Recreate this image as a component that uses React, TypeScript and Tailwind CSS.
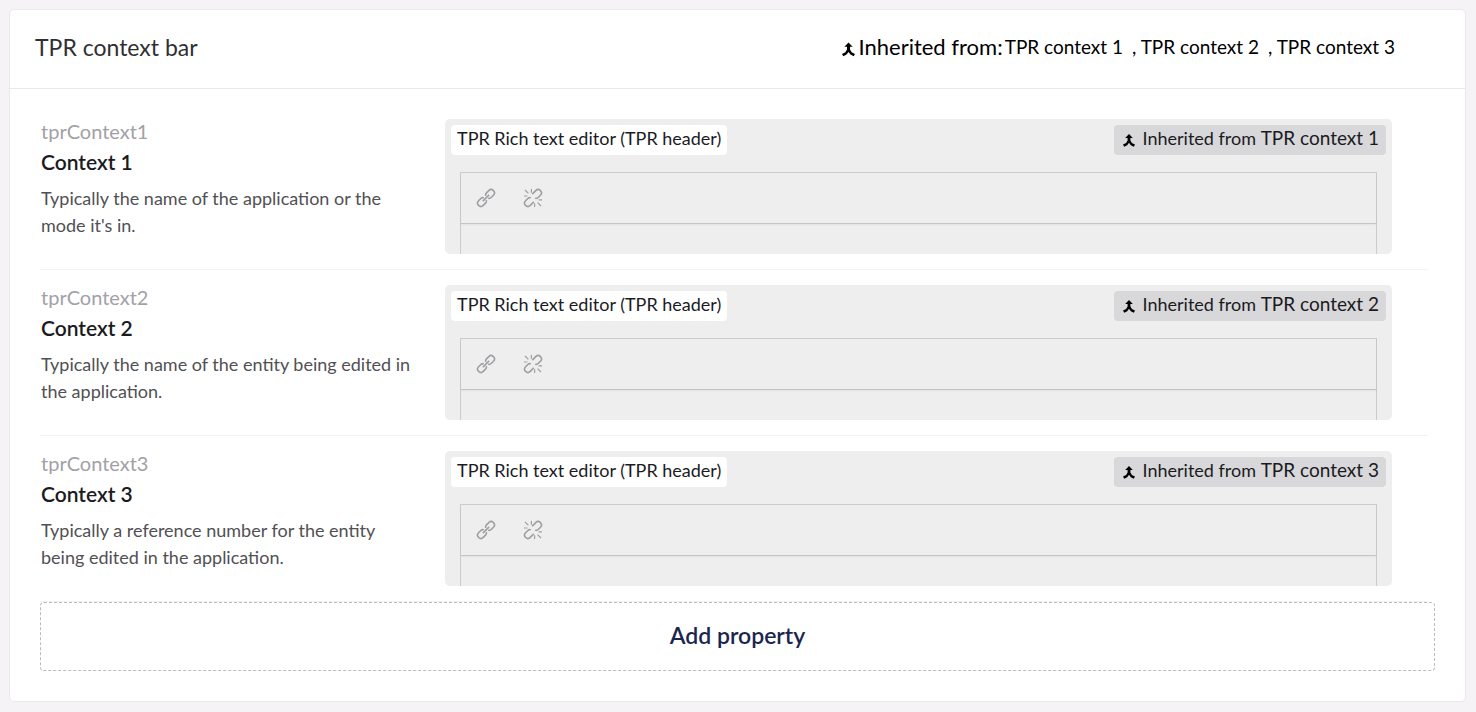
const inheritedFrom = ["TPR context 1", "TPR context 2", "TPR context 3"];

const properties = [
  {
    alias: "tprContext1",
    name: "Context 1",
    description: "Typically the name of the application or the mode it's in.",
    source: "TPR context 1",
  },
  {
    alias: "tprContext2",
    name: "Context 2",
    description: "Typically the name of the entity being edited in the application.",
    source: "TPR context 2",
  },
  {
    alias: "tprContext3",
    name: "Context 3",
    description: "Typically a reference number for the entity being edited in the application.",
    source: "TPR context 3",
  },
];

function MergeIcon({ className }: { className: string }) {
  return (
    <svg viewBox="0 0 12 13" className={className} aria-hidden="true">
      <path d="M6 0 L9.8 4 H7.4 V6.6 L8.9 9 L12 10.6 L10.8 12.8 L7.8 11.2 L6 8.8 L4.2 11.2 L1.2 12.8 L0 10.6 L3.1 9 L4.6 6.6 V4 H2.2 Z" fill="#000" />
    </svg>
  );
}

function LinkIcon() {
  return (
    <svg viewBox="0 0 20 20" className="size-5" fill="none" stroke="#a0a0a4" strokeWidth="1.6" aria-hidden="true">
      <g transform="translate(10 10) rotate(-45)">
        <path d="M1.4 -1.6 C1.8 -2.7 2.8 -3.3 4 -3.3 H7.2 A3.3 3.3 0 0 1 7.2 3.3 H4 C2.8 3.3 1.8 2.7 1.4 1.6" />
        <path d="M-1.4 -1.6 C-1.8 -2.7 -2.8 -3.3 -4 -3.3 H-7.2 A3.3 3.3 0 0 0 -7.2 3.3 H-4 C-2.8 3.3 -1.8 2.7 -1.4 1.6" />
        <path d="M-4.4 0 H4.4" />
      </g>
    </svg>
  );
}

function UnlinkIcon() {
  return (
    <svg viewBox="0 0 20 20" className="size-5" fill="none" stroke="#a0a0a4" strokeWidth="1.6" aria-hidden="true">
      <g transform="translate(10 10) rotate(-45)">
        <path d="M2.2 -3.3 H7.2 A3.3 3.3 0 0 1 7.2 3.3 H4 C2.8 3.3 1.8 2.7 1.4 1.6" />
        <path d="M-2.2 3.3 H-7.2 A3.3 3.3 0 0 1 -7.2 -3.3 H-4 C-2.8 -3.3 -1.8 -2.7 -1.4 -1.6" />
      </g>
      <path d="M2 2 L5.4 5.4 M8.4 1 V4.8 M1 8 H4.4 M14.6 14.6 L18 18 M11.6 15.2 V19 M15.6 11.8 H19" strokeWidth="1.2" />
    </svg>
  );
}

export default function App() {
  return (
    <div className="min-h-screen bg-[#f5f3f5] py-[9px] pr-[10px] pl-[9px] font-['Lato',sans-serif]">
      <section className="rounded-[5px] border border-[#e9e9eb] bg-white">
        <header className="flex h-[79px] items-center justify-between border-b border-[#e9e9eb] pr-[70px] pl-[25px]">
          <h1 className="pb-1 text-[23px] leading-8 text-[#303033]">TPR context bar</h1>
          <div className="flex items-center pb-1 text-black">
            <MergeIcon className="mt-1 mr-[3px] h-[15px] w-[13px]" />
            <span className="mr-[2px] text-[22px] leading-8">Inherited from:</span>
            <span className="flex gap-[9px] text-[19px] leading-8">
              {inheritedFrom.map((name, i) => (
                <span key={name}>
                  {i > 0 && ", "}
                  <a href="#">{name}</a>
                </span>
              ))}
            </span>
          </div>
        </header>
        <div className="px-[30px] pt-[15px] pb-[30px]">
          <div className="pr-[7px]">
            {properties.map((p) => (
              <article key={p.alias} className="flex border-b border-[#f3f3f5] py-[15px] pr-9">
                <div className="w-[405px] shrink-0 pr-[30px] pl-px">
                  <p className="text-[20px] leading-6 text-[#a2a1a6]">{p.alias}</p>
                  <h2 className="mt-1.5 text-[21px] leading-[26px] font-semibold text-[#1b1b1f]">{p.name}</h2>
                  <p className="mt-2.5 text-[18px] leading-[27px] text-[#515054]">{p.description}</p>
                </div>
                <div className="flex h-[135px] min-w-0 flex-1 flex-col overflow-hidden rounded-[5px] bg-[#eee]">
                  <div className="flex justify-between px-1.5 pt-1.5 text-[18px] leading-[27px] text-[#1b1b1f]">
                    <span className="rounded-[4px] bg-white px-1.5 pb-[3px]">TPR Rich text editor (TPR header)</span>
                    <span className="flex items-center rounded-[4px] bg-[#d8d7d9] pr-[7px] pb-[3px] pl-[9px]">
                      <MergeIcon className="mt-1 mr-2 h-[13px] w-3" />
                      <span>
                        Inherited from <a href="#" className="text-[19px] leading-none">{p.source}</a>
                      </span>
                    </span>
                  </div>
                  <div className="mx-[15px] mt-[17px] flex-1 border border-b-0 border-[#cbcbcb]">
                    <div className="flex h-[51px] items-center gap-[27px] border-b border-[#c4c4c4] px-[15px] shadow-xs">
                      <button type="button" aria-label="Insert link"><LinkIcon /></button>
                      <button type="button" aria-label="Remove link"><UnlinkIcon /></button>
                    </div>
                  </div>
                </div>
              </article>
            ))}
          </div>
          <button type="button" className="h-[69px] w-full rounded-[4px] border border-dashed border-[#bbbabf] pb-0.5 text-[23px] font-semibold text-[#1b264f]">
            Add property
          </button>
        </div>
      </section>
    </div>
  );
}
